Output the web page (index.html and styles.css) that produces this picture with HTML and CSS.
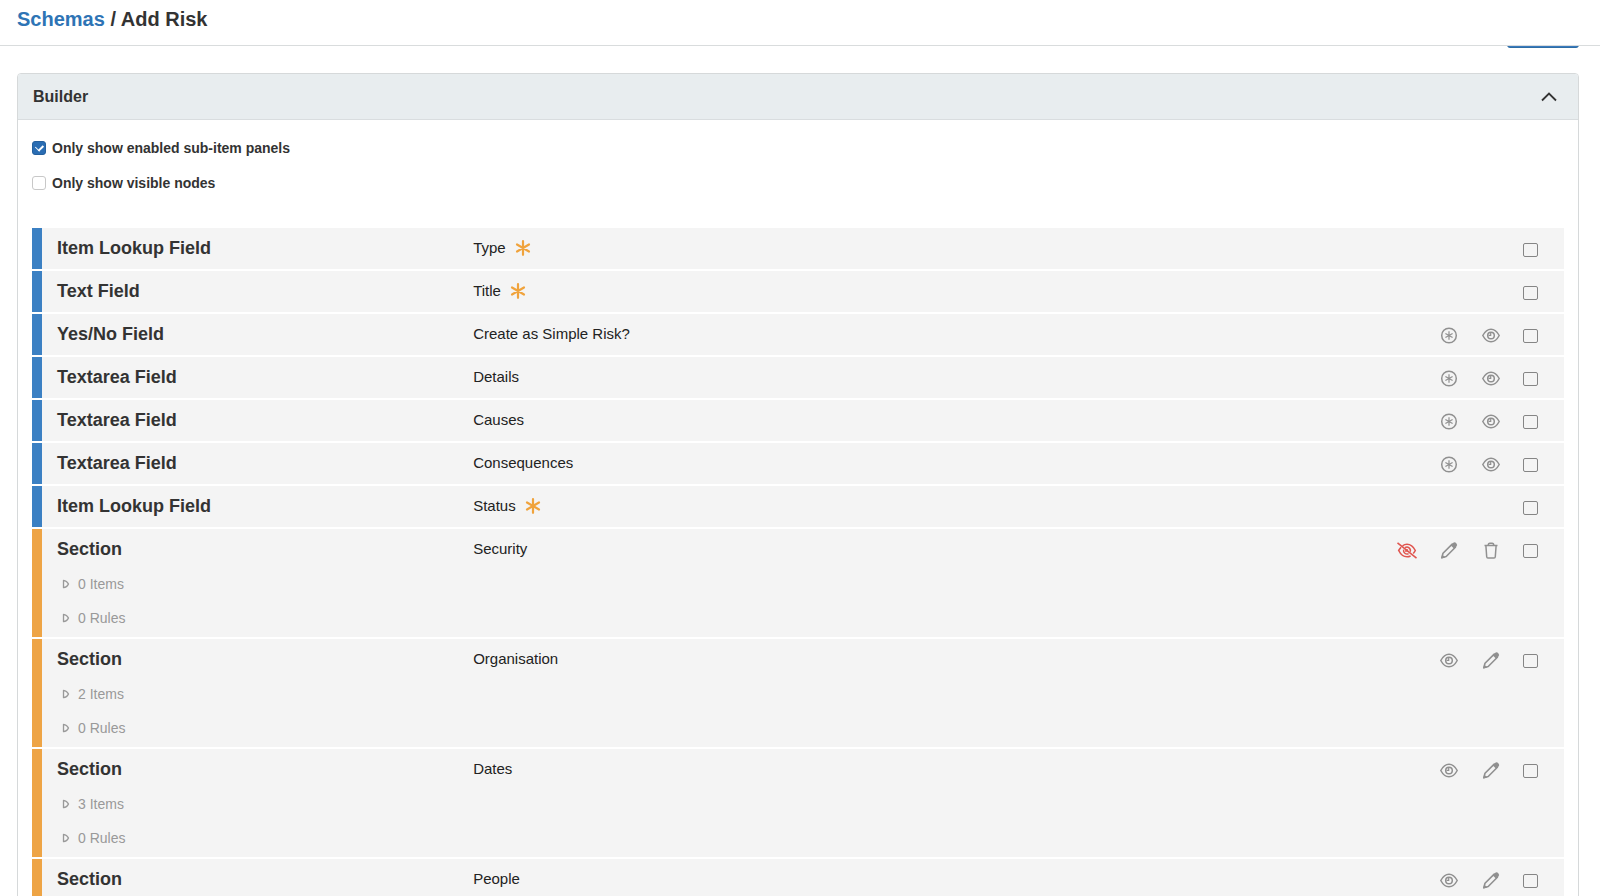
FILE: index.html
```html
<!DOCTYPE html>
<html lang="en">
<head>
<meta charset="utf-8">
<title>Schemas / Add Risk</title>
<meta name="viewport" content="width=device-width, initial-scale=1">
<link rel="stylesheet" href="styles.css">
</head>
<body>
<svg class="sprite" aria-hidden="true">
  <symbol id="eye" viewBox="0 0 20 20">
    <path d="M1.800 9.500C3.800 5.700 6.700 3.200 10 3.200S16.200 5.700 18.200 9.500C16.200 13.300 13.300 15.800 10 15.800S3.800 13.300 1.800 9.500Z" fill="none" stroke="currentColor" stroke-width="1.500"/>
    <circle cx="10" cy="9.500" r="3.300" fill="none" stroke="currentColor" stroke-width="1.500"/>
    <path d="M9.700 7v2.300H7.500" fill="none" stroke="currentColor" stroke-width="1.200"/>
  </symbol>
  <symbol id="eye-off" viewBox="0 0 20 20">
    <path d="M5.500 4.800C6.900 3.800 8.400 3.300 10 3.300c3.300 0 6.300 2.300 8.300 6.200-.6 1.200-1.300 2.200-2.100 3M13.600 15c-1.100.5-2.300.8-3.600.8-3.300 0-6.300-2.300-8.300-6.300.7-1.300 1.500-2.400 2.400-3.300" fill="none" stroke="currentColor" stroke-width="1.600"/>
    <path d="M8 6.700A3.500 3.500 0 0 1 13.200 10.800M11.600 12.600A3.500 3.500 0 0 1 6.600 8.700M10 8v2H8" fill="none" stroke="currentColor" stroke-width="1.500"/>
    <path d="M.5 1.800 19.500 17.200" stroke="currentColor" stroke-width="1.600"/>
  </symbol>
  <symbol id="required" viewBox="0 0 20 20">
    <circle cx="10" cy="9.500" r="7.300" fill="none" stroke="currentColor" stroke-width="1.500"/>
    <path d="M10 5.300v8.400M6.400 7.400l7.200 4.200M13.600 7.400l-7.200 4.200" stroke="currentColor" stroke-width="1.200"/>
  </symbol>
  <symbol id="pencil" viewBox="0 0 20 20">
    <path d="M2.800 16.800 4 12.300 13.200 3.100 16.400 6.300 7.200 15.500Z" fill="none" stroke="currentColor" stroke-width="1.600" stroke-linejoin="round"/>
    <path d="M11.600 4.300 13.800 2.200a2.400 2.400 0 0 1 3.500 3.500l-2.200 2.100Z" fill="currentColor"/>
    <path d="M2.200 17.400 3.200 13.400 6.200 16.400Z" fill="currentColor"/>
  </symbol>
  <symbol id="trash" viewBox="0 0 20 20">
    <path d="M3.500 4.600h13M7.200 4.400c0-1.800.7-2.200 1.700-2.200h2.200c1 0 1.700.4 1.700 2.200M4.900 4.800l.8 10.900q.1 1.200 1.300 1.200h6q1.200 0 1.300-1.200l.8-10.900" fill="none" stroke="currentColor" stroke-width="1.500"/>
  </symbol>
  <symbol id="star" viewBox="0 0 16 16">
    <path d="M8 1.200v13.600M2 4.500l12 7M14 4.500l-12 7" stroke="currentColor" stroke-width="2.200" stroke-linecap="round"/>
  </symbol>
  <symbol id="caret" viewBox="0 0 8 10">
    <path d="M1.500 1.300Q4.800 1.600 6.500 5 4.800 8.400 1.500 8.700Z" fill="none" stroke="currentColor" stroke-width="1.300" stroke-linejoin="round"/>
  </symbol>
</svg>

<div class="app">
  <header class="topbar">
    <h1 class="breadcrumb"><a href="#">Schemas</a> / Add Risk</h1>
  </header>
  <main class="content">
    <div class="toolbar"><button class="save" type="button" aria-label="Save"></button></div>
    <section class="panel">
      <div class="panel-head">
        <h2 class="panel-title">Builder</h2>
        <button class="collapse" type="button" aria-label="Collapse">
          <svg viewBox="0 0 16 10"><path d="M1 8.500 8 1.500l7 7" fill="none" stroke="currentColor" stroke-width="1.800"/></svg>
        </button>
      </div>
      <div class="panel-body">
        <div class="filters">
          <label class="filter"><input class="check" type="checkbox" checked>Only show enabled sub-item panels</label>
          <label class="filter"><input class="check" type="checkbox">Only show visible nodes</label>
        </div>
        <ul class="nodes">
          <li class="node">
            <h3 class="kind">Item Lookup Field</h3>
            <div class="name">Type<svg class="star"><use href="#star"/></svg></div>
            <div class="actions"><input class="pick" type="checkbox" aria-label="Select Type"></div>
          </li>
          <li class="node">
            <h3 class="kind">Text Field</h3>
            <div class="name">Title<svg class="star"><use href="#star"/></svg></div>
            <div class="actions"><input class="pick" type="checkbox" aria-label="Select Title"></div>
          </li>
          <li class="node">
            <h3 class="kind">Yes/No Field</h3>
            <div class="name">Create as Simple Risk?</div>
            <div class="actions">
              <button class="act" type="button" aria-label="Required"><svg><use href="#required"/></svg></button>
              <button class="act" type="button" aria-label="Visible"><svg><use href="#eye"/></svg></button>
              <input class="pick" type="checkbox" aria-label="Select Create as Simple Risk?">
            </div>
          </li>
          <li class="node">
            <h3 class="kind">Textarea Field</h3>
            <div class="name">Details</div>
            <div class="actions">
              <button class="act" type="button" aria-label="Required"><svg><use href="#required"/></svg></button>
              <button class="act" type="button" aria-label="Visible"><svg><use href="#eye"/></svg></button>
              <input class="pick" type="checkbox" aria-label="Select Details">
            </div>
          </li>
          <li class="node">
            <h3 class="kind">Textarea Field</h3>
            <div class="name">Causes</div>
            <div class="actions">
              <button class="act" type="button" aria-label="Required"><svg><use href="#required"/></svg></button>
              <button class="act" type="button" aria-label="Visible"><svg><use href="#eye"/></svg></button>
              <input class="pick" type="checkbox" aria-label="Select Causes">
            </div>
          </li>
          <li class="node">
            <h3 class="kind">Textarea Field</h3>
            <div class="name">Consequences</div>
            <div class="actions">
              <button class="act" type="button" aria-label="Required"><svg><use href="#required"/></svg></button>
              <button class="act" type="button" aria-label="Visible"><svg><use href="#eye"/></svg></button>
              <input class="pick" type="checkbox" aria-label="Select Consequences">
            </div>
          </li>
          <li class="node">
            <h3 class="kind">Item Lookup Field</h3>
            <div class="name">Status<svg class="star"><use href="#star"/></svg></div>
            <div class="actions"><input class="pick" type="checkbox" aria-label="Select Status"></div>
          </li>
          <li class="node section">
            <div class="group">
              <h3 class="kind">Section</h3>
              <button class="sub" type="button"><svg><use href="#caret"/></svg>0 Items</button>
              <button class="sub" type="button"><svg><use href="#caret"/></svg>0 Rules</button>
            </div>
            <div class="name">Security</div>
            <div class="actions">
              <button class="act hidden-state" type="button" aria-label="Hidden"><svg><use href="#eye-off"/></svg></button>
              <button class="act" type="button" aria-label="Edit"><svg><use href="#pencil"/></svg></button>
              <button class="act" type="button" aria-label="Delete"><svg><use href="#trash"/></svg></button>
              <input class="pick" type="checkbox" aria-label="Select Security">
            </div>
          </li>
          <li class="node section">
            <div class="group">
              <h3 class="kind">Section</h3>
              <button class="sub" type="button"><svg><use href="#caret"/></svg>2 Items</button>
              <button class="sub" type="button"><svg><use href="#caret"/></svg>0 Rules</button>
            </div>
            <div class="name">Organisation</div>
            <div class="actions">
              <button class="act" type="button" aria-label="Visible"><svg><use href="#eye"/></svg></button>
              <button class="act" type="button" aria-label="Edit"><svg><use href="#pencil"/></svg></button>
              <input class="pick" type="checkbox" aria-label="Select Organisation">
            </div>
          </li>
          <li class="node section">
            <div class="group">
              <h3 class="kind">Section</h3>
              <button class="sub" type="button"><svg><use href="#caret"/></svg>3 Items</button>
              <button class="sub" type="button"><svg><use href="#caret"/></svg>0 Rules</button>
            </div>
            <div class="name">Dates</div>
            <div class="actions">
              <button class="act" type="button" aria-label="Visible"><svg><use href="#eye"/></svg></button>
              <button class="act" type="button" aria-label="Edit"><svg><use href="#pencil"/></svg></button>
              <input class="pick" type="checkbox" aria-label="Select Dates">
            </div>
          </li>
          <li class="node section">
            <h3 class="kind">Section</h3>
            <div class="name">People</div>
            <div class="actions">
              <button class="act" type="button" aria-label="Visible"><svg><use href="#eye"/></svg></button>
              <button class="act" type="button" aria-label="Edit"><svg><use href="#pencil"/></svg></button>
              <input class="pick" type="checkbox" aria-label="Select People">
            </div>
          </li>
        </ul>
      </div>
    </section>
  </main>
</div>
</body>
</html>
```
FILE: styles.css
```css
* { box-sizing: border-box; }

body {
  margin: 0;
  font-family: "Liberation Sans", Arial, sans-serif;
  font-size: 15px;
  color: #333;
  background: #fff;
}

h1, h2, h3, ul { margin: 0; padding: 0; }
button { padding: 0; border: 0; background: none; font: inherit; color: inherit; cursor: pointer; }
svg { display: block; }
.sprite { display: none; }

.app { display: flex; flex-direction: column; height: 100vh; }

.topbar {
  flex: none;
  padding: 7px 17px 14px;
  border-bottom: 1px solid #d9dcdd;
}
.breadcrumb { font-size: 20px; line-height: 24px; font-weight: 700; }
.breadcrumb a { color: #2e74b5; text-decoration: none; }

.content { flex: 1; min-height: 0; overflow-y: auto; scrollbar-width: none; padding: 0 21px 24px 17px; }

.toolbar { display: flex; justify-content: flex-end; margin-top: -34px; margin-bottom: 25px; }
.save { width: 72px; height: 36px; border-radius: 3px; background: #3a7abd; border: 1px solid #2e6da4; }

.panel { border: 1px solid #d6d9da; border-radius: 4px; }
.panel-head {
  display: flex;
  align-items: center;
  justify-content: space-between;
  height: 46px;
  padding: 0 21px 0 15px;
  background: #e8edef;
  border-bottom: 1px solid #d9dddf;
  border-radius: 3px 3px 0 0;
}
.panel-title { font-size: 16px; line-height: 20px; font-weight: 700; }
.collapse svg { width: 16px; height: 10px; }

.panel-body { padding: 19px 14px; }

.filters { display: flex; flex-direction: column; gap: 17px; align-items: flex-start; margin-bottom: 36px; }
.filter { display: flex; align-items: center; gap: 6px; font-size: 14px; line-height: 18px; font-weight: 700; }
.check {
  appearance: none;
  display: grid;
  place-items: center;
  width: 14px;
  height: 14px;
  margin: 0;
  border: 1px solid #c8c8c8;
  border-radius: 3px;
  background: #fff;
}
.check:checked { background: #2a6db3; border-color: #24609e; }
.check:checked::before {
  content: "";
  width: 6px;
  height: 4px;
  margin-bottom: 2px;
  border-left: 1px solid #fff;
  border-bottom: 2px solid #fff;
  transform: rotate(-45deg);
}

.nodes { display: flex; flex-direction: column; gap: 2px; list-style: none; }
.node {
  display: grid;
  grid-template-columns: 28.1% 1fr auto;
  align-items: start;
  min-height: 41px;
  padding: 10px 26px 0 15px;
  border-left: 10px solid #3b80c3;
  background: #f4f4f4;
}
.section { min-height: 108px; border-left-color: #eea445; }

.kind { font-size: 18px; line-height: 20px; font-weight: 700; }
.name { display: flex; align-items: center; gap: 9px; line-height: 20px; color: #222; }
.star { width: 16px; height: 16px; color: #f0a33c; }

.group { display: flex; flex-direction: column; align-items: flex-start; }
.group .kind { margin-bottom: 8px; }
.sub { display: flex; align-items: center; gap: 8px; padding-left: 5px; font-size: 14px; line-height: 34px; color: #999; }
.sub svg { width: 8px; height: 10px; }

.actions { display: flex; align-items: center; gap: 22px; height: 24px; color: #909090; }
.act svg { width: 20px; height: 20px; }
.hidden-state { color: #e0554f; }
.pick {
  appearance: none;
  width: 15px;
  height: 14px;
  margin: 0;
  border: 1px solid #858585;
  border-radius: 2px;
}
```
